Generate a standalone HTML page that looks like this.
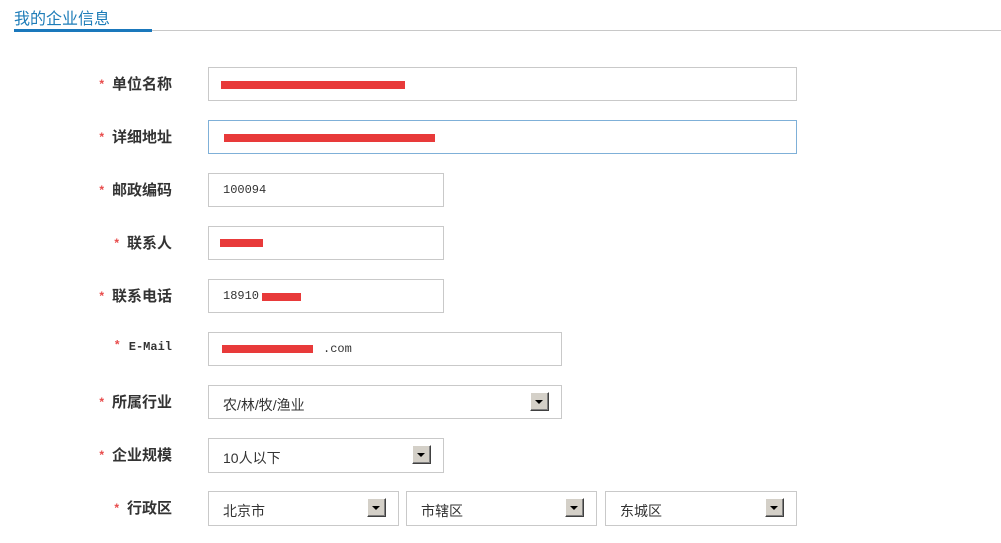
<!DOCTYPE html>
<html><head><meta charset="utf-8"><style>
body{margin:0;width:1001px;height:543px;background:#fff;position:relative;overflow:hidden;font-family:"Liberation Sans","Noto Sans CJK SC",sans-serif}
.t{position:absolute;left:14px;top:5px;font-size:16px;color:#1d7cb8}
.l1{position:absolute;left:14px;top:29px;width:138px;height:3px;background:#1a78bc}
.l2{position:absolute;left:152px;top:30px;width:849px;height:1px;background:#c8c8c8}
.lb{position:absolute;right:829px;font-size:15px;font-weight:bold;color:#333;white-space:nowrap;font-family:"Liberation Sans","Noto Sans CJK SC",sans-serif}
.lb i{font-style:normal;color:#e84a4a;font-size:12px;margin-right:8px;position:relative;top:-1px}
.b{position:absolute;box-sizing:border-box;border:1px solid #c9c9c9;height:34px;background:#fff;font-size:14px;color:#333;padding-left:14px;line-height:32px;font-family:"Liberation Sans","Noto Sans CJK SC",sans-serif}
.m{font-family:"Liberation Mono",monospace;font-size:12px}
.r{position:absolute;background:#e83a3a;height:8px}
.a{position:absolute;right:12px;top:6px;width:19px;height:19px;box-sizing:border-box;background:#d4d0c8;border-top:1px solid #fff;border-left:1px solid #fff;border-right:1px solid #404040;border-bottom:1px solid #404040;box-shadow:inset -1px -1px #808080}
.a:after{content:"";position:absolute;left:4px;top:7px;border-left:4px solid transparent;border-right:4px solid transparent;border-top:4px solid #000}
</style></head><body>
<div class="t">我的企业信息</div><div class="l1"></div><div class="l2"></div>

<div class="lb" style="top:73px"><i>*</i>单位名称</div>
<div class="b" style="left:208px;top:67px;width:589px"></div>
<div class="r" style="left:221px;top:81px;width:184px"></div>

<div class="lb" style="top:126px"><i>*</i>详细地址</div>
<div class="b" style="left:208px;top:120px;width:589px;border-color:#7fb0d8"></div>
<div class="r" style="left:224px;top:134px;width:211px"></div>

<div class="lb" style="top:179px"><i>*</i>邮政编码</div>
<div class="b m" style="left:208px;top:173px;width:236px">100094</div>

<div class="lb" style="top:232px"><i>*</i>联系人</div>
<div class="b" style="left:208px;top:226px;width:236px"></div>
<div class="r" style="left:220px;top:239px;width:43px"></div>

<div class="lb" style="top:285px"><i>*</i>联系电话</div>
<div class="b m" style="left:208px;top:279px;width:236px">18910</div>
<div class="r" style="left:262px;top:293px;width:39px"></div>

<div class="lb" style="top:340px;font-family:'Liberation Mono',monospace;font-size:12px"><i>*</i>E-Mail</div>
<div class="b m" style="left:208px;top:332px;width:354px"><span style="margin-left:100px">.com</span></div>
<div class="r" style="left:222px;top:345px;width:91px"></div>

<div class="lb" style="top:391px"><i>*</i>所属行业</div>
<div class="b" style="left:208px;top:385px;width:354px;padding-top:3px">农/林/牧/渔业<div class="a"></div></div>

<div class="lb" style="top:444px"><i>*</i>企业规模</div>
<div class="b" style="left:208px;top:438px;width:236px;height:35px;padding-top:3px">10人以下<div class="a"></div></div>

<div class="lb" style="top:497px"><i>*</i>行政区</div>
<div class="b" style="left:208px;top:491px;width:191px;height:35px;padding-top:3px">北京市<div class="a"></div></div>
<div class="b" style="left:406px;top:491px;width:191px;height:35px;padding-top:3px">市辖区<div class="a"></div></div>
<div class="b" style="left:605px;top:491px;width:192px;height:35px;padding-top:3px">东城区<div class="a"></div></div>
</body></html>
